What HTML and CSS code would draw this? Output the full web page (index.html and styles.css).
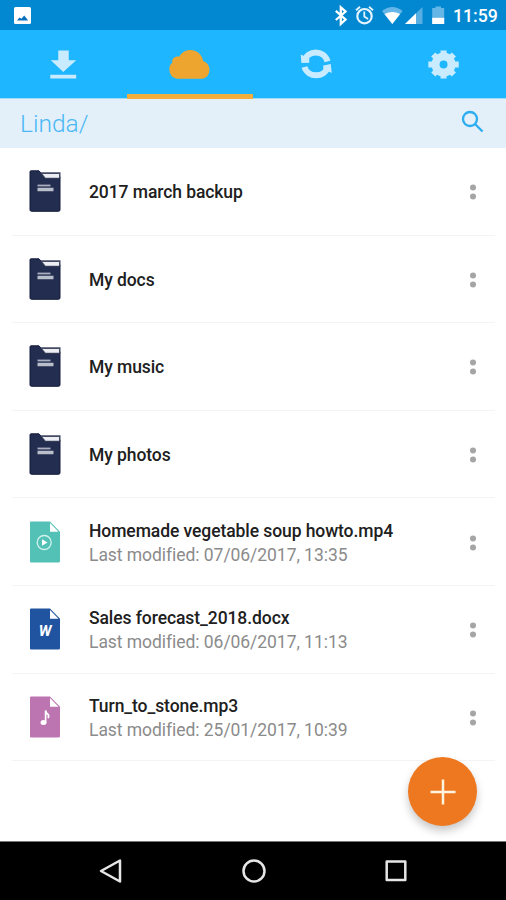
FILE: index.html
```
<!DOCTYPE html>
<html lang="en">
<head>
<meta charset="utf-8">
<meta name="viewport" content="width=device-width, initial-scale=1">
<title>Linda</title>
<link rel="stylesheet" href="styles.css">
</head>
<body>
<svg class="defs" aria-hidden="true">
  <symbol id="folder" viewBox="0 0 32 42">
    <path d="M2 .8h8l5 6h16v33a1.500 1.500 0 0 1-1.500 1.500H2.500A1.500 1.500 0 0 1 1 40V1.800Q1 .8 2 .8z" fill="#232d4f" stroke="#141d3e"/>
    <path d="M11.500 2.300h20v6.200H16z" fill="#434a62"/>
    <path d="M13.500 4h16.500v3.800H16.500z" fill="#eceef3"/>
    <path d="M8.500 15.500h13" stroke="#a9afbf" stroke-width="1.800"/>
    <path d="M8.500 19.500h16" stroke="#b9bfca" stroke-width="3.500"/>
  </symbol>
  <symbol id="sheet" viewBox="0 0 32 42">
    <path d="M2 .5h19l10 10.200V40q0 1.500-1.500 1.500H2Q1 41.500 1 40.500v-39Q1 .5 2 .5z"/>
    <path d="M21 2v8.700h8.500z" fill="#fff"/>
  </symbol>
  <symbol id="dots" viewBox="0 0 10 20">
    <circle cx="5" cy="5.500" r="3"/><circle cx="5" cy="14.500" r="3"/>
  </symbol>
</svg>

<div class="screen">
  <header class="status">
    <svg class="picture" viewBox="0 0 17 17"><rect width="17" height="17" rx="1.500" fill="#fff"/><path d="M3 13.500l2.500-3 2 1.200 2.700-3.200 4 5z" fill="#0670be"/></svg>
    <svg class="signals" viewBox="333 0 113 30">
      <path d="M335.800 10.800l9.700 8.700-4.700 4.300V7.300l4.700 4.200-9.700 8.500" fill="none" stroke="#fff" stroke-width="2.300"/>
      <g fill="none" stroke="#e4f4ff" stroke-width="2.200"><circle cx="364.500" cy="16.200" r="7.200"/><path d="M364.300 11.500v5l3.800 2.400M356 10.300l4-3.500M373 10.300l-4-3.500" stroke-width="1.800"/></g>
      <path d="M382 11q10.300-8 20.600 0L392.300 24z" fill="#63b6e7"/>
      <path d="M384.500 14q7.800-4 15.600 0l-7.800 10z" fill="#fff"/>
      <path d="M422.500 7v17H405z" fill="#57aee2"/><path d="M416 13.300V24H405z" fill="#fff"/>
      <path d="M435.500 6.500h5.500v1.500h3.200v16h-12V8h3.300z" fill="#64b6e7"/><path d="M432.200 17.800h12V24h-12z" fill="#fff"/>
    </svg>
    <span class="clock">11:59</span>
  </header>

  <nav class="tabs">
    <a class="tab"><svg viewBox="0 30 127 65"><path d="M58.500 50.500h10.500v9.800h7.500L63.500 72l-12.500-11.700h7.500zM50.500 74.800h26v3.800h-26z" fill="#c9ebff"/></svg></a>
    <a class="tab active"><svg viewBox="127 30 127 65"><path d="M177.500 78.800a9.500 9.500 0 0 1-5-16.300c-.8-4.300 3-6.500 7-5.800 4.500-9.500 21-9.500 24 4.200a9.400 9.400 0 0 1-.5 17.900z" fill="#eea530"/></svg></a>
    <a class="tab"><svg viewBox="253 30 126 65"><g fill="none" stroke="#c9ebff" stroke-width="6"><path d="M304 61.500C307 49.500 324 49.500 327.300 61.500"/><path d="M304.200 67C307.500 78 324.500 78 327.500 67"/></g><path d="M300.500 54.500l8.500 4v4.200l-7.800.3zM331.500 73l-8.500-4v-3.500l7.500-1.500z" fill="#c9ebff"/></svg></a>
    <a class="tab"><svg viewBox="380 30 126 65"><g fill="none" stroke="#c9ebff"><circle cx="443.300" cy="64.500" r="8" stroke-width="8"/><path d="M443.300 54.500V50.500M443.300 74.500v4M433.300 64.500h-5.200M453.300 64.500h5.200M436 57.500l-3-3M450.600 57.500l3-3M436 71.500l-3 3M450.600 71.500l3 3" stroke-width="6"/></g></svg></a>
  </nav>

  <div class="path">
    <span>Linda/</span>
    <svg viewBox="0 0 24 24"><circle cx="9" cy="9" r="7" /><path d="M14 14l7.500 7.500"/></svg>
  </div>

  <main class="list">
    <div class="row"><svg class="icon"><use href="#folder"/></svg><div class="text"><div class="name">2017 march backup</div></div><svg class="more"><use href="#dots"/></svg></div>
    <div class="row"><svg class="icon"><use href="#folder"/></svg><div class="text"><div class="name">My docs</div></div><svg class="more"><use href="#dots"/></svg></div>
    <div class="row"><svg class="icon"><use href="#folder"/></svg><div class="text"><div class="name">My music</div></div><svg class="more"><use href="#dots"/></svg></div>
    <div class="row"><svg class="icon"><use href="#folder"/></svg><div class="text"><div class="name">My photos</div></div><svg class="more"><use href="#dots"/></svg></div>
    <div class="row"><svg class="icon video" viewBox="0 0 32 42"><use href="#sheet"/><circle cx="15.200" cy="21.500" r="7" fill="none" stroke="#d2f2ed" stroke-width="1.300"/><path d="M13 18.200l5.500 3.300-5.500 3.300z" fill="#fff"/></svg><div class="text"><div class="name">Homemade vegetable soup howto.mp4</div><div class="date">Last modified: 07/06/2017, 13:35</div></div><svg class="more"><use href="#dots"/></svg></div>
    <div class="row"><svg class="icon word" viewBox="0 0 32 42"><use href="#sheet"/><text x="16" y="28" text-anchor="middle" class="letter">W</text></svg><div class="text"><div class="name">Sales forecast_2018.docx</div><div class="date">Last modified: 06/06/2017, 11:13</div></div><svg class="more"><use href="#dots"/></svg></div>
    <div class="row"><svg class="icon audio" viewBox="0 0 32 42"><use href="#sheet"/><ellipse cx="14.500" cy="26.500" rx="3" ry="2.500" fill="#fff"/><path d="M16.600 26.500V14.500q.5 3 2.200 3.600 1.500 1.500.3 4" fill="none" stroke="#fff" stroke-width="1.700"/></svg><div class="text"><div class="name">Turn_to_stone.mp3</div><div class="date">Last modified: 25/01/2017, 10:39</div></div><svg class="more"><use href="#dots"/></svg></div>
  </main>

  <button class="add" aria-label="Add"><svg viewBox="0 0 26 26"><path d="M13 .5v25M.5 13h25"/></svg></button>

  <footer class="navbar">
    <svg viewBox="0 0 24 24"><path d="M21 1.500v21L2 12z"/></svg>
    <svg viewBox="0 0 24 24"><circle cx="12" cy="12" r="10.500"/></svg>
    <svg viewBox="0 0 24 24"><rect x="2.700" y="2.500" width="18.600" height="18.600"/></svg>
  </footer>
</div>
</body>
</html>
```
FILE: styles.css
```
* { box-sizing: border-box; }
body { margin: 0; font-family: Roboto, sans-serif; background: #fff; }
svg { display: block; flex: none; }
.defs { position: absolute; width: 0; height: 0; }
.screen { position: relative; width: 506px; height: 900px; display: flex; flex-direction: column; overflow: hidden; }

.status { height: 30px; flex: none; display: flex; align-items: center; background: #0288d1; padding: 0 9px 0 14px; color: #fff; }
.picture { width: 17px; height: 17px; }
.signals { width: 113px; height: 30px; margin-left: auto; margin-right: 7px; }
.clock { width: 44px; font-size: 17.7px; font-weight: 500; line-height: 30px; white-space: nowrap; padding-top: 2px; }

.tabs { height: 69px; flex: none; display: grid; grid-template-columns: repeat(4, 1fr); background: #1eb6ff; border-bottom: 1px solid #9edcfa; }
.tab { height: 69px; border-bottom: 5px solid transparent; }
.tab svg { width: 100%; height: 65px; }
.tab.active { border-color: #f2ae3c; }

.path { height: 49px; flex: none; display: flex; justify-content: space-between; background: #e3f0fa; padding: 0 21px 0 20px; color: #4bb8f5; font-size: 24.5px; font-weight: 300; line-height: 50px; }
.path svg { width: 24px; height: 24px; margin-top: 11px; fill: none; stroke: #2badf0; stroke-width: 2.300; }

.list { flex: 1; padding: 0 11px 0 12px; }
.row { height: 87.6px; display: flex; align-items: center; border-bottom: 1px solid #f4f4f4; padding: 2px 17px 0 17px; }
.icon { width: 32px; height: 42px; margin-top: -2px; }
.text { flex: 1; margin-left: 28px; white-space: nowrap; }
.name { font-size: 17.5px; letter-spacing: -.08px; font-weight: 500; line-height: 24px; color: #202020; }
.date { font-size: 17.5px; letter-spacing: -.05px; line-height: 24px; color: #8b8b8b; }
.more { width: 10px; height: 20px; fill: #a5a5a5; }
.video { fill: #54c1b6; }
.word { fill: #2154a0; }
.audio { fill: #bd75b2; }
.letter { font: italic 700 15px Roboto, sans-serif; fill: #fff; }

.add { position: absolute; left: 408px; top: 757px; width: 69px; height: 69px; border: 0; border-radius: 50%; padding: 0; display: flex; align-items: center; justify-content: center; background: #ee7820; box-shadow: 0 5px 8px rgba(0, 0, 0, .22); }
.add svg { width: 26px; height: 26px; fill: none; stroke: #fff4df; stroke-width: 2.500; }

.navbar { height: 59px; flex: none; display: flex; align-items: center; justify-content: space-between; background: #000; border-top: 1px solid #777; padding: 0 98px 0 99px; }
.navbar svg { width: 24px; height: 24px; fill: none; stroke: #e6e6e6; stroke-width: 2.500; stroke-linejoin: round; }
```
